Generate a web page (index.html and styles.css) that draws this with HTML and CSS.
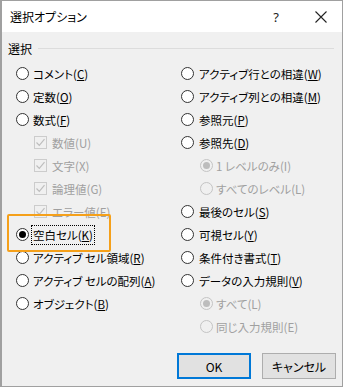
FILE: index.html
```html
<!DOCTYPE html>
<html lang="ja">
<head>
<meta charset="utf-8">
<link rel="stylesheet" href="styles.css">
</head>
<body>
<div class="dialog">
  <div class="titlebar">
    <span class="title">選択オプション</span>
    <span class="help">?</span>
    <span class="close"><svg width="12" height="12" viewBox="0 0 12 12"><path d="M0.5 0.5 L11.5 11.5 M11.5 0.5 L0.5 11.5" stroke="#222" stroke-width="1.1" fill="none"/></svg></span>
  </div>
  <div class="body">
    <div class="group-label"><span>選択</span><div class="rule"></div></div>
    <div class="grid">
      <div class="col left">
        <div class="row"><span class="radio"></span><span class="lbl">コメント(<u>C</u>)</span></div>
        <div class="row"><span class="radio"></span><span class="lbl">定数(<u>O</u>)</span></div>
        <div class="row"><span class="radio"></span><span class="lbl">数式(<u>F</u>)</span></div>
        <div class="row sub"><span class="check"><svg width="11" height="11" viewBox="0 0 11 11"><path d="M1.5 5.5 L4.3 8.3 L9.5 2.2" stroke="#bdbdbd" stroke-width="1.2" fill="none"/></svg></span><span class="lbl dis">数値(U)</span></div>
        <div class="row sub"><span class="check"><svg width="11" height="11" viewBox="0 0 11 11"><path d="M1.5 5.5 L4.3 8.3 L9.5 2.2" stroke="#bdbdbd" stroke-width="1.2" fill="none"/></svg></span><span class="lbl dis">文字(X)</span></div>
        <div class="row sub"><span class="check"><svg width="11" height="11" viewBox="0 0 11 11"><path d="M1.5 5.5 L4.3 8.3 L9.5 2.2" stroke="#bdbdbd" stroke-width="1.2" fill="none"/></svg></span><span class="lbl dis">論理値(G)</span></div>
        <div class="row sub"><span class="check"><svg width="11" height="11" viewBox="0 0 11 11"><path d="M1.5 5.5 L4.3 8.3 L9.5 2.2" stroke="#bdbdbd" stroke-width="1.2" fill="none"/></svg></span><span class="lbl dis">エラー値(E)</span></div>
        <div class="row"><span class="radio on"></span><span class="lbl focus">空白セル(<u>K</u>)</span></div>
        <div class="row"><span class="radio"></span><span class="lbl">アクティブ セル領域(<u>R</u>)</span></div>
        <div class="row"><span class="radio"></span><span class="lbl">アクティブ セルの配列(<u>A</u>)</span></div>
        <div class="row"><span class="radio"></span><span class="lbl">オブジェクト(<u>B</u>)</span></div>
      </div>
      <div class="col right">
        <div class="row"><span class="radio"></span><span class="lbl">アクティブ行との相違(<u>W</u>)</span></div>
        <div class="row"><span class="radio"></span><span class="lbl">アクティブ列との相違(<u>M</u>)</span></div>
        <div class="row"><span class="radio"></span><span class="lbl">参照元(<u>P</u>)</span></div>
        <div class="row"><span class="radio"></span><span class="lbl">参照先(<u>D</u>)</span></div>
        <div class="row sub"><span class="radio dis on"></span><span class="lbl dis">1 レベルのみ(I)</span></div>
        <div class="row sub"><span class="radio dis"></span><span class="lbl dis">すべてのレベル(L)</span></div>
        <div class="row"><span class="radio"></span><span class="lbl">最後のセル(<u>S</u>)</span></div>
        <div class="row"><span class="radio"></span><span class="lbl">可視セル(<u>Y</u>)</span></div>
        <div class="row"><span class="radio"></span><span class="lbl">条件付き書式(<u>T</u>)</span></div>
        <div class="row"><span class="radio"></span><span class="lbl">データの入力規則(<u>V</u>)</span></div>
        <div class="row sub"><span class="radio dis on"></span><span class="lbl dis">すべて(L)</span></div>
        <div class="row sub"><span class="radio dis"></span><span class="lbl dis">同じ入力規則(E)</span></div>
      </div>
    </div>
    <div class="buttons">
      <button class="btn default">OK</button>
      <button class="btn">キャンセル</button>
    </div>
  </div>
  <div class="highlight"></div>
</div>
</body>
</html>
```
FILE: styles.css
```css
* { box-sizing: border-box; }
html, body { margin: 0; padding: 0; background: #ffffff; }
body {
  font-family: "Noto Sans CJK JP", "Noto Sans", sans-serif;
  font-size: 11.5px;
  font-feature-settings: "palt";
  color: #000;
}
.dialog {
  position: relative;
  width: 343px;
  height: 387px;
  border: 1px solid #a0a0a0;
  border-left-width: 2px;
  background: #f0f0f0;
  display: flex;
  flex-direction: column;
}
.titlebar {
  height: 31px;
  background: #fff;
  display: flex;
  align-items: center;
  padding-left: 8px;
}
.title { flex: 1; font-size: 12px; }
.help {
  font-family: "Noto Sans", sans-serif;
  font-size: 13px;
  width: 14px;
  text-align: center;
  margin-right: 32px;
  color: #222;
}
.close { width: 12px; height: 12px; display: flex; margin-right: 15px; }
.body {
  flex: 1;
  display: flex;
  flex-direction: column;
}
.group-label {
  display: flex;
  align-items: center;
  height: 18px;
  margin-top: 7px;
  padding-left: 6px;
  padding-right: 8px;
  font-size: 12px;
}
.group-label span { margin-right: 6px; }
.rule { flex: 1; height: 1px; background: #dcdcdc; }
.grid {
  display: grid;
  grid-template-columns: 165px 1fr;
  padding-left: 14px;
  margin-top: 5px;
}
.col { display: flex; flex-direction: column; }
.row {
  height: 23px;
  display: flex;
  align-items: center;
  gap: 4px;
  white-space: nowrap;
}
.right .row { gap: 5px; }
.row.sub { padding-left: 18px; gap: 5px; }
.right .row.sub { padding-left: 19px; gap: 3px; }
.radio {
  width: 13px;
  height: 13px;
  border-radius: 50%;
  border: 1px solid #333;
  background: #fff;
  flex: none;
  display: flex;
  align-items: center;
  justify-content: center;
}
.radio.on::after {
  content: "";
  width: 7px;
  height: 7px;
  border-radius: 50%;
  background: #000;
}
.radio.dis { border-color: #c4c4c4; background: #f0f0f0; }
.radio.dis.on::after { background: #bdbdbd; }
.check {
  width: 13px;
  height: 13px;
  border: 1px solid #cccccc;
  background: #f0f0f0;
  flex: none;
  display: flex;
  align-items: center;
  justify-content: center;
}
.lbl { line-height: 16px; }
.lbl u { text-underline-offset: 1px; }
.lbl.dis { color: #a0a0a0; }
.lbl.focus {
  outline: 1px dotted #000;
  padding: 1px 1px;
  margin-left: -1px;
}
.buttons {
  display: flex;
  justify-content: flex-end;
  gap: 11px;
  margin-top: 15px;
  padding-right: 6px;
}
.btn {
  width: 74px;
  height: 26px;
  background: #e1e1e1;
  border: 1px solid #adadad;
  font-family: "Noto Sans CJK JP", "Noto Sans", sans-serif;
  font-size: 12px;
  font-feature-settings: "palt";
  color: #000;
  padding: 0;
}
.btn.default {
  border: 1px solid #0078d7;
  box-shadow: inset 0 0 0 1px #0078d7;
}
.highlight {
  position: absolute;
  left: 5px;
  top: 213px;
  width: 104px;
  height: 38px;
  border: 2px solid #f5a01a;
  border-radius: 2px;
}
```
